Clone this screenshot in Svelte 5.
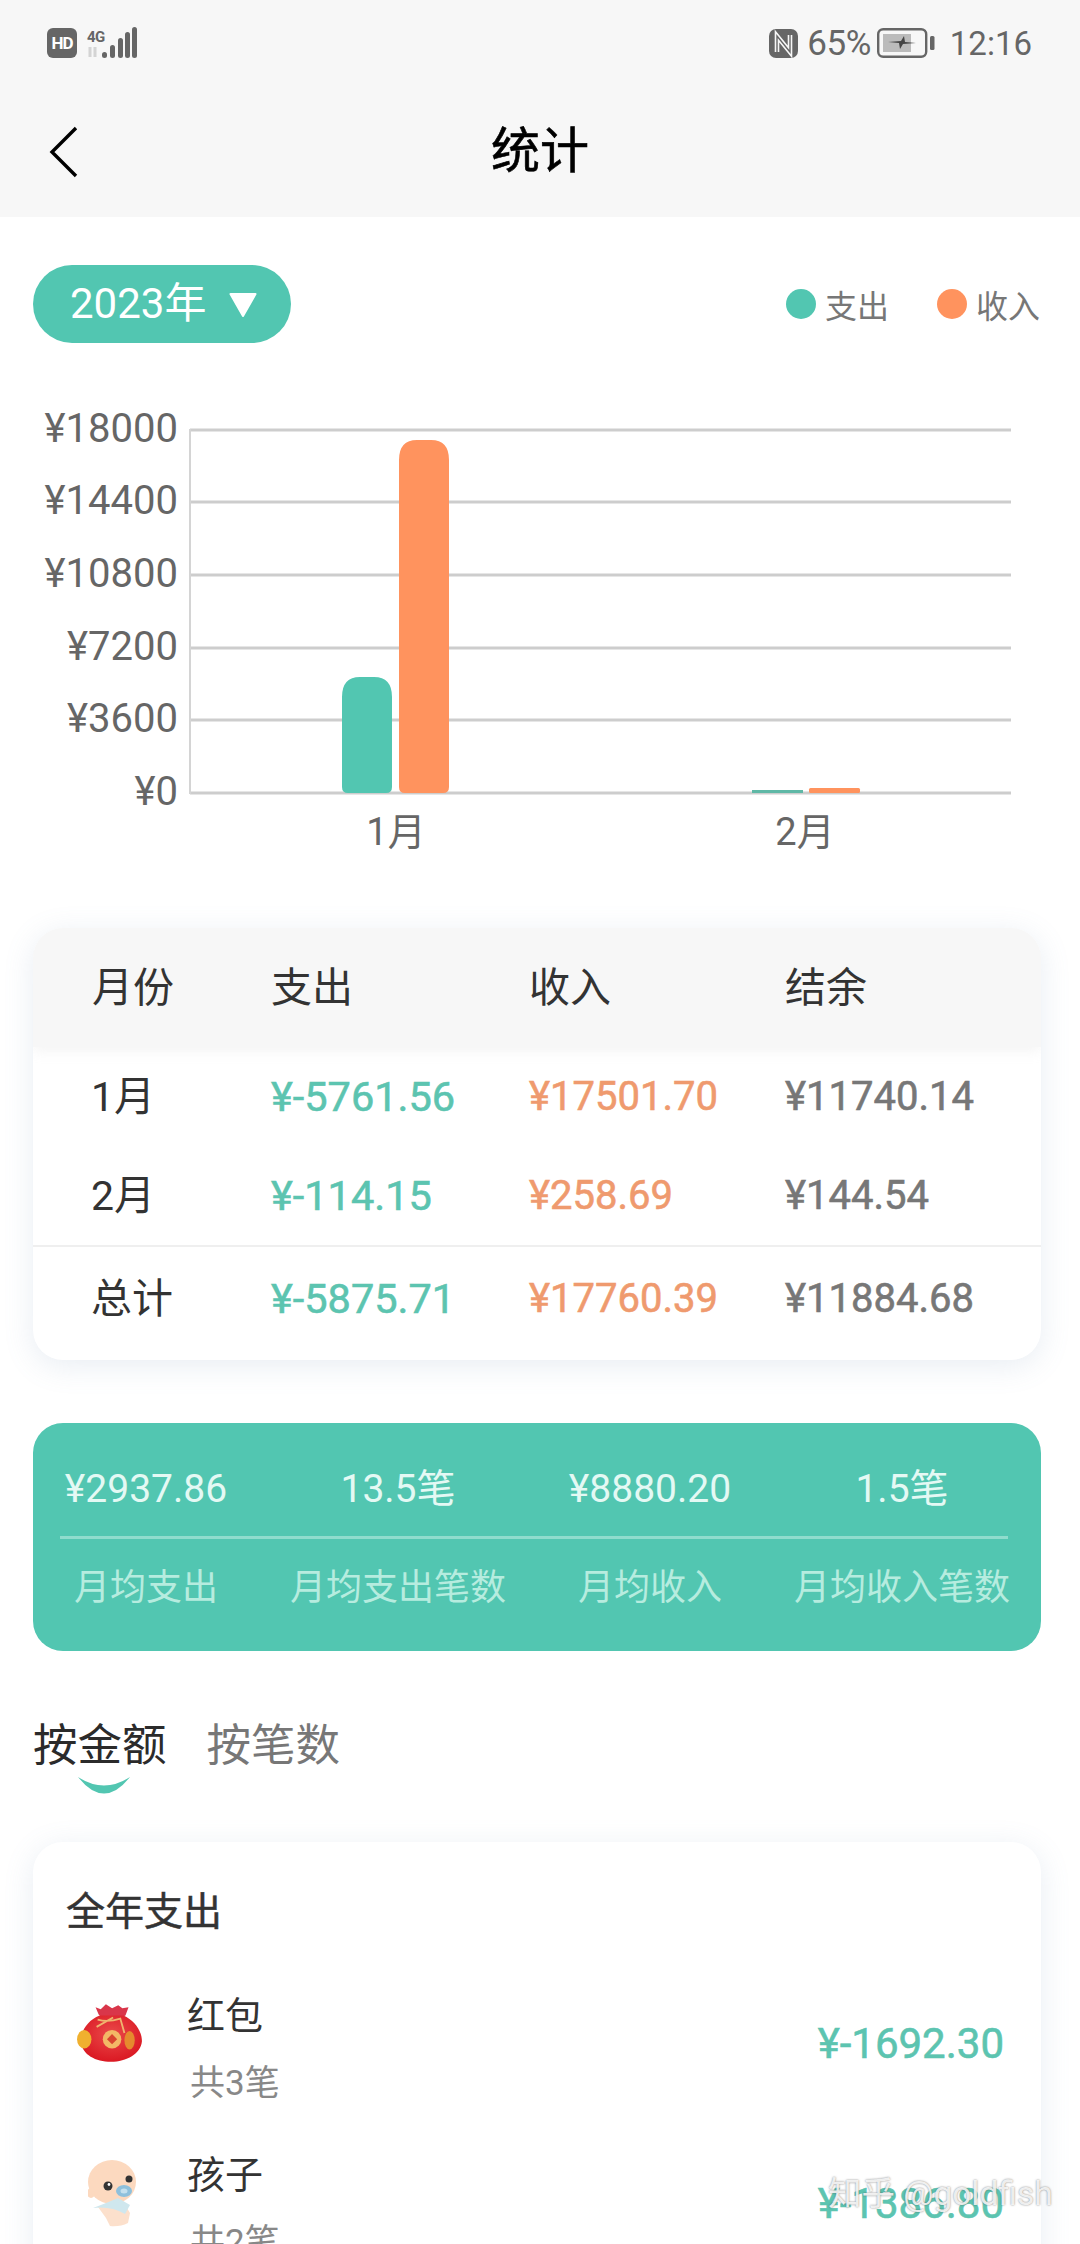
<script>
  const ticks = [
    { label: '¥18000', y: 431 },
    { label: '¥14400', y: 503 },
    { label: '¥10800', y: 576 },
    { label: '¥7200', y: 649 },
    { label: '¥3600', y: 721 },
    { label: '¥0', y: 794 }
  ];
  const grid = [430, 502, 575, 648, 720, 793];
  const rows = [
    { month: '1月', out: '¥-5761.56', inc: '¥17501.70', rest: '¥11740.14' },
    { month: '2月', out: '¥-114.15', inc: '¥258.69', rest: '¥144.54' }
  ];
  const total = { month: '总计', out: '¥-5875.71', inc: '¥17760.39', rest: '¥11884.68' };
  const stats = [
    { value: '¥2937.86', label: '月均支出' },
    { value: '13.5笔', label: '月均支出笔数' },
    { value: '¥8880.20', label: '月均收入' },
    { value: '1.5笔', label: '月均收入笔数' }
  ];
</script>

<div class="page">
  <header class="head">
    <div class="status">
      <div class="status-left">
        <span class="hd">HD</span>
        <div class="net">
          <span class="four-g">4G</span>
          <svg width="24" height="12" viewBox="0 0 24 12">
            <path d="M3 1v10M8 11V1" stroke="#d4d4d4" stroke-width="3" fill="none" />
          </svg>
        </div>
        <svg class="signal" width="36" height="32" viewBox="0 0 36 32">
          <g fill="#666">
            <rect x="0" y="25" width="5" height="6" rx="2.5" />
            <rect x="8" y="18" width="5" height="13" rx="2.5" />
            <rect x="16" y="11" width="5" height="20" rx="2.5" />
            <rect x="23" y="5" width="5" height="26" rx="2.5" />
            <rect x="30" y="0" width="5" height="31" rx="2.5" />
          </g>
        </svg>
      </div>
      <div class="status-right">
        <svg width="29" height="29" viewBox="0 0 29 29">
          <rect width="29" height="29" rx="7" fill="#666" />
          <path d="M8 23V7l13 16V6" stroke="#f7f7f7" stroke-width="4.6" fill="none" />
          <path d="M8 24V7l13 16V5" stroke="#666" stroke-width="1.4" fill="none" />
        </svg>
        <span class="pct">65%</span>
        <svg class="batt" width="58" height="30" viewBox="0 0 58 30">
          <rect x="1.2" y="1.2" width="48" height="27.6" rx="5" fill="none" stroke="#666" stroke-width="2.4" />
          <rect x="6" y="6" width="28" height="18" fill="#bbb" />
          <path d="M11 14l13-1 3-5 1 6 11 1-13 1-3 5-1-6z" fill="#444" />
          <rect x="53" y="8" width="4.5" height="14" rx="1.5" fill="#666" />
        </svg>
        <span class="time">12:16</span>
      </div>
    </div>
    <nav class="nav">
      <svg class="back" width="30" height="52" viewBox="0 0 30 52">
        <path d="M27 2L3 26l24 24" stroke="#000" stroke-width="3.4" fill="none" />
      </svg>
      <h1>统计</h1>
      <span></span>
    </nav>
  </header>

  <div class="toolbar">
    <div class="pill">
      <span>2023年</span>
      <svg width="32" height="25" viewBox="0 0 30 24">
        <path d="M3 2h24L15 23z" fill="#fff" stroke="#fff" stroke-width="2" stroke-linejoin="round" />
      </svg>
    </div>
    <div class="legend">
      <span class="dot teal"></span><span class="legend-text">支出</span>
      <span class="dot orange"></span><span class="legend-text">收入</span>
    </div>
  </div>

  <svg class="chart" width="1080" height="460" viewBox="0 400 1080 460">
    {#each grid as y}
      <line x1="190" x2="1011" y1={y} y2={y} stroke="#cdcdcd" stroke-width="3" />
    {/each}
    {#each ticks as t}
      <text x="178" y={t.y} text-anchor="end" dominant-baseline="middle" class="axis">{t.label}</text>
    {/each}
    <line x1="190" x2="190" y1="429" y2="794" stroke="#d4d4d4" stroke-width="2" />
    <path d="M342 793V697q0-20 18-20h14q18 0 18 20V787q0 6-6 6H348q-6 0-6-6z" fill="#52c6b1" />
    <path d="M399 793V460q0-20 18-20h14q18 0 18 20V787q0 6-6 6H405q-6 0-6-6z" fill="#ff935e" />
    <rect x="752" y="790" width="51" height="3" fill="#5fb8a6" />
    <rect x="809" y="788" width="51" height="5" rx="1.5" fill="#ff935e" />
    <text x="396" y="835" text-anchor="middle" dominant-baseline="middle" class="axis month">1月</text>
    <text x="805" y="835" text-anchor="middle" dominant-baseline="middle" class="axis month">2月</text>
  </svg>

  <section class="table card">
    <div class="tr th">
      <span>月份</span><span>支出</span><span>收入</span><span>结余</span>
    </div>
    {#each rows as r}
      <div class="tr td">
        <span class="m">{r.month}</span>
        <span class="o">{r.out}</span>
        <span class="i">{r.inc}</span>
        <span class="r">{r.rest}</span>
      </div>
    {/each}
    <div class="tr td sum">
      <span class="m">{total.month}</span>
      <span class="o">{total.out}</span>
      <span class="i">{total.inc}</span>
      <span class="r">{total.rest}</span>
    </div>
  </section>

  <section class="stats">
    <div class="stats-row values">
      {#each stats as s}<span>{s.value}</span>{/each}
    </div>
    <div class="stats-line"></div>
    <div class="stats-row labels">
      {#each stats as s}<span>{s.label}</span>{/each}
    </div>
  </section>

  <div class="tabs">
    <div class="tab active">
      <span>按金额</span>
      <svg width="52" height="17" viewBox="0 0 52 17">
        <path d="M0 0Q26 33 52 0Q26 17 0 0z" fill="#52c6b1" />
      </svg>
    </div>
    <div class="tab"><span>按笔数</span></div>
  </div>

  <section class="list card">
    <h2>全年支出</h2>
    <div class="item">
      <svg class="icon" width="68" height="60" viewBox="0 0 66 58">
        <defs>
          <radialGradient id="bag" cx="0.5" cy="0.4" r="0.65">
            <stop offset="0" stop-color="#ea4a4a" />
            <stop offset="1" stop-color="#d9141f" />
          </radialGradient>
        </defs>
        <path d="M19 4l5 2 5-5 6 4 6-3 4 3 6-1-3 8-8 4H27l-5-5z" fill="#d9364a" />
        <path d="M23 12C10 17 4 29 5 38c1 12 14 19 29 19s29-8 30-20c0-10-7-20-18-25z" fill="url(#bag)" />
        <path d="M21 16q10 3 22-1l4 14M36 14l-16 9" stroke="#efb56f" stroke-width="1.8" fill="none" />
        <circle cx="35" cy="35" r="9" fill="#f3b866" />
        <rect x="31.5" y="31.5" width="7" height="7" transform="rotate(45 35 35)" fill="#d9442f" />
        <ellipse cx="8" cy="35" rx="7" ry="9" fill="#f0b02f" />
        <ellipse cx="52" cy="36" rx="5" ry="9" fill="#e58a2e" />
      </svg>
      <div class="info">
        <span class="name">红包</span>
        <span class="count">共3笔</span>
      </div>
      <span class="amount">¥-1692.30</span>
    </div>
    <div class="item">
      <svg class="icon baby" width="52" height="68" viewBox="0 0 52 68">
        <ellipse cx="24" cy="23" rx="24" ry="22" fill="#fcd9bf" />
        <ellipse cx="3" cy="34" rx="4" ry="5" fill="#fcd9bf" />
        <path d="M10 48l26-4 6 10-2 10q-8 4-18 3l-4-8z" fill="#fce0cc" />
        <path d="M5 49q16-6 25-10l12 7-5 9q-14-8-32-6z" fill="#cfe7ee" />
        <circle cx="20" cy="27" r="4.5" fill="#333" />
        <circle cx="41" cy="20" r="3.5" fill="#333" />
        <circle cx="21" cy="25.5" r="1.4" fill="#fff" />
        <ellipse cx="36" cy="32" rx="8" ry="6" fill="#8ec0dc" />
        <ellipse cx="36" cy="32" rx="3.5" ry="2.5" fill="#c4e0ee" />
      </svg>
      <div class="info">
        <span class="name">孩子</span>
        <span class="count">共2笔</span>
      </div>
      <span class="amount">¥-1386.80</span>
    </div>
  </section>

  <div class="mark">知乎 @goldfish</div>
</div>

<style>
  :global(body) {
    margin: 0;
    background: #fff;
  }

  .page {
    position: relative;
    width: 1080px;
    height: 2244px;
    overflow: hidden;
    background: #fff;
    font-family: Roboto, "Noto Sans CJK SC", sans-serif;
  }

  .head {
    height: 217px;
    background: #f7f7f7;
  }

  .status {
    display: flex;
    justify-content: space-between;
    align-items: center;
    height: 86px;
    padding: 0 48px 0 47px;
  }

  .status-left,
  .status-right {
    display: flex;
    align-items: center;
  }

  .hd {
    display: flex;
    align-items: center;
    justify-content: center;
    width: 30px;
    height: 30px;
    border-radius: 6px;
    background: #666;
    color: #fff;
    font-size: 17px;
    font-weight: 700;
    letter-spacing: -1px;
  }

  .net {
    display: flex;
    flex-direction: column;
    width: 24px;
    margin: 0 0 0 10px;
  }

  .four-g {
    font-size: 15px;
    line-height: 17px;
    font-weight: 700;
    color: #666;
    letter-spacing: -0.5px;
  }

  .signal {
    margin-left: -9px;
  }

  .pct {
    margin-left: 9px;
    font-size: 35px;
    color: #666;
    letter-spacing: -0.5px;
  }

  .batt {
    margin-left: 6px;
  }

  .time {
    margin-left: 15px;
    font-size: 33px;
    color: #666;
  }

  .nav {
    display: grid;
    grid-template-columns: 1fr auto 1fr;
    align-items: center;
    height: 131px;
    padding-left: 49px;
    padding-right: 49px;
  }

  .nav h1 {
    margin: 0;
    font-size: 49px;
    font-weight: 400;
    color: #000;
    line-height: 1;
    -webkit-text-stroke: 0.6px #000;
  }

  .toolbar {
    display: flex;
    justify-content: space-between;
    align-items: center;
    margin-top: 48px;
    padding: 0 40px 0 33px;
  }

  .pill {
    display: flex;
    align-items: center;
    gap: 21px;
    box-sizing: border-box;
    width: 258px;
    height: 78px;
    padding-left: 37px;
    border-radius: 39px;
    background: #52c6b1;
    color: #fff;
    font-size: 42px;
    line-height: 1;
  }

  .legend {
    display: flex;
    align-items: center;
  }

  .dot {
    width: 30px;
    height: 30px;
    border-radius: 50%;
  }

  .teal {
    background: #52c6b1;
  }

  .orange {
    margin-left: 48px;
    background: #ff935e;
  }

  .legend-text {
    margin-left: 9px;
    font-size: 32px;
    color: #777;
  }

  .chart {
    display: block;
    margin-top: 57px;
  }

  .axis {
    font-family: Roboto, "Noto Sans CJK SC", sans-serif;
    font-size: 40px;
    fill: #666;
  }

  .month {
    font-size: 38px;
  }

  .card {
    margin: 0 39px 0 33px;
    border-radius: 30px;
    background: #fff;
    box-shadow: 0 6px 30px rgba(110, 140, 180, 0.16);
  }

  .table {
    margin-top: 68px;
    overflow: hidden;
    padding-bottom: 9px;
  }

  .tr {
    display: grid;
    grid-template-columns: 179px 258px 256px 1fr;
    align-items: center;
    padding-left: 59px;
    line-height: 46px;
  }

  .th {
    height: 119px;
    box-sizing: border-box;
    background: #f7f7f7;
    box-shadow: 0 4px 12px rgba(200, 200, 200, 0.2);
    font-size: 41px;
    color: #333;
  }

  .td {
    height: 99px;
    font-size: 40px;
  }

  .sum {
    height: 106px;
    box-sizing: border-box;
    border-top: 2px solid #efefef;
  }

  .m {
    margin-left: -1px;
    color: #333;
    font-size: 41px;
  }

  .o {
    font-size: 41.5px;
    color: #5cc4b0;
    -webkit-text-stroke: 0.6px #5cc4b0;
  }

  .i {
    color: #ef9a6e;
    -webkit-text-stroke: 0.6px #ef9a6e;
  }

  .r {
    color: #777;
    -webkit-text-stroke: 0.6px #777;
  }

  .stats {
    height: 228px;
    margin: 63px 39px 0 33px;
    border-radius: 30px;
    background: #52c6b1;
  }

  .stats-row {
    display: grid;
    grid-template-columns: repeat(4, 252px);
    justify-items: center;
    align-items: center;
    margin-left: -13px;
    white-space: nowrap;
    line-height: 46px;
  }

  .values {
    height: 113px;
    padding-top: 19px;
    box-sizing: border-box;
    font-size: 39px;
    color: #e4f9f4;
  }

  .stats-line {
    height: 3px;
    margin: 0 33px 0 27px;
    background: #8fdccd;
  }

  .labels {
    height: 92px;
    padding-top: 5px;
    box-sizing: border-box;
    font-size: 36px;
    color: #b6ecdf;
  }

  .tabs {
    display: flex;
    gap: 40px;
    margin-top: 65px;
    padding-left: 33px;
    height: 79px;
    font-size: 44.5px;
    line-height: 60px;
    color: #777;
  }

  .tab svg {
    display: block;
    margin: 1px 0 0 45px;
  }

  .tab span {
    display: block;
  }

  .active {
    color: #2b2b2b;
  }

  .list {
    margin-top: 47px;
    padding: 47px 37px 200px 33px;
  }

  .list h2 {
    margin: 0 0 40px;
    font-size: 39px;
    line-height: 46px;
    font-weight: 400;
    color: #333;
    -webkit-text-stroke: 0.5px #333;
  }

  .item {
    position: relative;
    display: flex;
    align-items: flex-start;
    height: 160px;
  }

  .icon {
    flex: none;
    width: 68px;
    margin: 28px 0 0 10px;
  }

  .baby {
    width: 52px;
    margin: 24px 0 0 22px;
  }

  .info {
    display: flex;
    flex-direction: column;
    margin: 15px 0 0 43px;
  }

  .baby + .info {
    margin-left: 47px;
  }

  .baby + .info .name {
    margin-top: -1px;
  }

  .name {
    font-size: 38px;
    line-height: 52px;
    color: #333;
  }

  .count {
    margin-top: 20px;
    font-size: 35px;
    line-height: 44px;
    color: #888;
    padding-left: 3px;
  }

  .amount {
    margin: 46px 0 0 auto;
    font-size: 42px;
    line-height: 46px;
    color: #5cc4b0;
    -webkit-text-stroke: 0.6px #5cc4b0;
  }

  .mark {
    position: absolute;
    left: 828px;
    top: 2172px;
    font-size: 33.5px;
    line-height: 44px;
    color: rgba(255, 255, 255, 0.85);
    text-shadow: 0 0 2px rgba(70, 70, 70, 0.7);
    white-space: nowrap;
  }
</style>
